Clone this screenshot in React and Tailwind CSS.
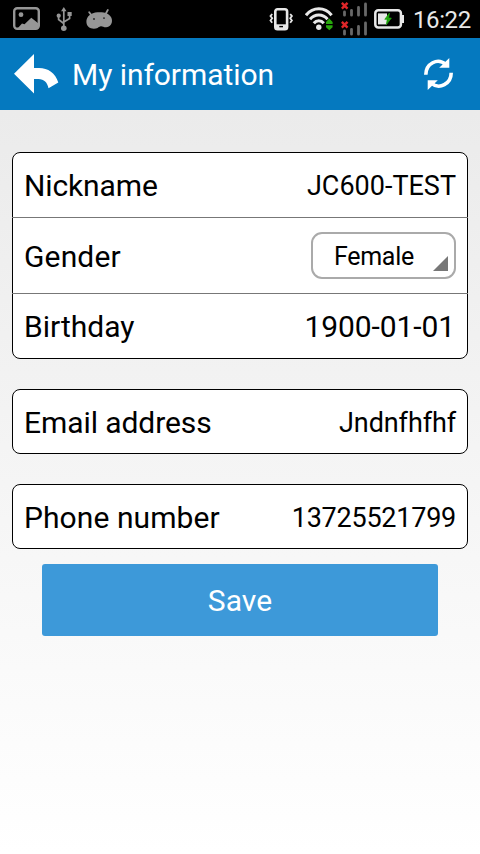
const profileRows = [
  { label: 'Nickname', value: 'JC600-TEST', height: 'h-16', labelClass: 'tracking-[-0.12px]', valueClass: 'text-[27px]' },
  { label: 'Gender', value: 'Female', height: 'h-[75px]', labelClass: 'tracking-[0.15px]', select: true },
  { label: 'Birthday', value: '1900-01-01', height: 'h-16', valueClass: 'text-[30px] tracking-[-0.1px] pr-px' },
];

function GalleryIcon() {
  return (
    <svg width="27" height="23" viewBox="0 0 27 23" fill="none">
      <rect x="1.2" y="1.2" width="24.6" height="20.6" rx="3" stroke="#969696" strokeWidth="2.4" />
      <circle cx="8" cy="7.7" r="2.4" fill="#969696" />
      <path d="M4.5 21.5L9 16.5L11.5 17.3L18.3 10.8L25.5 16.5V20L24 21.5Z" fill="#969696" />
    </svg>
  );
}

function UsbIcon() {
  return (
    <svg width="16" height="24" viewBox="0 0 16 24" fill="none">
      <path d="M7.8 3V20M2.6 9V12.5L7.8 16.5M13.6 7.5V11.5L7.8 15" stroke="#969696" strokeWidth="1.7" />
      <path d="M7.8 0L10.5 4.3H5.1Z" fill="#969696" />
      <circle cx="2.7" cy="8.7" r="2.1" fill="#969696" />
      <rect x="11.5" y="5" width="4.2" height="4" fill="#969696" />
      <circle cx="7.8" cy="21.2" r="2.8" fill="#969696" />
    </svg>
  );
}

function AndroidIcon() {
  return (
    <svg width="27" height="20" viewBox="0 0 27 20" fill="none">
      <path d="M3.2 3.2L5.6 6.5M21.8 1L19.6 5" stroke="#969696" strokeWidth="1.8" strokeLinecap="round" />
      <path d="M0.4 13C0.2 7.5 5 3.8 11.5 3.3C18 2.8 24.5 4.5 25.8 10C26.8 14.5 24 18.2 20.2 18.3C17.5 18.4 16.2 16.8 14.2 17.4C12.2 18 11.2 19.7 7.8 19.7C3.8 19.7 0.6 17.5 0.4 13Z" fill="#969696" />
      <circle cx="8" cy="10" r="0.9" fill="#222" />
      <circle cx="18" cy="9.1" r="0.9" fill="#222" />
    </svg>
  );
}

function VibrateIcon() {
  return (
    <svg width="25" height="23" viewBox="0 0 25 23" fill="none" stroke="#e8e8e8">
      <rect x="6.3" y="1.3" width="11.8" height="20" rx="2.2" strokeWidth="2.6" />
      <path d="M6.5 18.6H17.9" strokeWidth="4.6" />
      <path d="M10.3 18.6H14" stroke="#000" strokeWidth="1.4" />
      <path d="M3.2 6L1.5 8L3.2 10.2L1.5 12.5L3.2 14.8M21.2 6L22.9 8L21.2 10.2L22.9 12.5L21.2 14.8" strokeWidth="1.8" />
    </svg>
  );
}

function WifiIcon() {
  return (
    <svg width="28" height="24" viewBox="0 0 28 24" fill="none">
      <g stroke="#e8e8e8" strokeWidth="3">
        <path d="M1 8.2C8 -0.3 19.8 -0.3 26.6 8.2" />
        <path d="M5 12.3C9.8 6.7 17.8 6.7 22.6 12.3" />
        <path d="M8.8 16.3C11.6 12.9 16 12.9 18.8 16.3" />
      </g>
      <circle cx="13.8" cy="20.2" r="2.7" fill="#e8e8e8" />
      <path d="M24.3 11.5L27.6 15V17H21V15ZM24.3 23.2L21 20.2V18.2H27.6V20.2Z" fill="#000" stroke="#000" strokeWidth="1" />
      <path d="M24.3 11.5L27.6 15V17H21V15ZM24.3 23.2L21 20.2V18.2H27.6V20.2Z" fill="#28a80c" />
    </svg>
  );
}

function NoSignalIcon() {
  return (
    <svg width="26" height="16" viewBox="0 0 26 16" fill="none">
      <path d="M3.5 10V13.2M10.5 8.3V13.2M17.5 5.5V13.2M24.5 2V13.2" stroke="#686868" strokeWidth="2.8" strokeLinecap="round" />
      <path d="M0.8 0.9L6.5 6.6M6.5 0.9L0.8 6.6" stroke="#df2629" strokeWidth="2.5" />
    </svg>
  );
}

function BatteryIcon() {
  return (
    <svg width="31" height="20" viewBox="0 0 31 20" fill="none">
      <rect x="1.3" y="1.3" width="25.6" height="17.2" rx="3" stroke="#e8e8e8" strokeWidth="2.5" />
      <path d="M28 6H30V14H28Z" fill="#e8e8e8" />
      <rect x="4" y="4.4" width="9" height="11" fill="#e8e8e8" />
      <path d="M15.4 4.2L10.8 10.3H13.3L12.4 15.6L17.3 9.1H14.6Z" fill="#1fa50d" stroke="#1fa50d" strokeWidth="0.8" />
    </svg>
  );
}

function StatusBar() {
  return (
    <div className="flex h-[38px] items-start bg-black pr-[9px] pl-[13px]">
      <div className="flex items-start pt-[7px]">
        <GalleryIcon />
        <div className="ml-[16px]"><UsbIcon /></div>
        <div className="mt-[2px] ml-[14px]"><AndroidIcon /></div>
      </div>
      <div className="ml-auto flex items-start">
        <div className="mt-[8px]"><VibrateIcon /></div>
        <div className="mt-[7px] ml-[11px]"><WifiIcon /></div>
        <div className="mt-[2px] ml-[8px] flex flex-col gap-[3px]">
          <NoSignalIcon />
          <NoSignalIcon />
        </div>
        <div className="mt-[9px] ml-[7px]"><BatteryIcon /></div>
        <span className="ml-[8px] w-[58px] pt-px text-[24px] leading-[38px] tracking-[-0.4px] text-[#e8e8e8]">16:22</span>
      </div>
    </div>
  );
}

function Header() {
  return (
    <header className="flex h-[72px] items-center bg-[#0579bf] pr-[26px] pl-[14px] text-white">
      <button aria-label="Back">
        <svg width="45" height="40" viewBox="0 0 45 40" fill="currentColor">
          <path d="M20 0V14H25C34 14 41.5 19 44.3 28.5L34.5 34.3C33.5 28.5 30 25 24.5 25H20V39.5L0 19.7Z" />
        </svg>
      </button>
      <h1 className="ml-[13px] pt-0.5 text-[30px] leading-9 tracking-[-0.06px]">My information</h1>
      <button aria-label="Refresh" className="ml-auto">
        <svg width="30" height="32" viewBox="0 0 30 32" fill="none">
          <path d="M1.8 16.7C1.8 5.7 13.5 -0.8 21.8 6.4M27.2 14.7C27.2 25.6 15.5 32.2 7.2 25.2" stroke="currentColor" strokeWidth="3.6" />
          <path d="M25.3 0V9.8H15.2ZM3.7 32V22.2H13.8Z" fill="currentColor" />
        </svg>
      </button>
    </header>
  );
}

function Select({ value }) {
  return (
    <button className="flex h-[47px] w-[145px] items-center justify-between rounded-[11px] border-2 border-[#aaa] pr-[6px] pl-[21px] text-[25px]">
      <span className="pt-0.5 tracking-[-0.3px]">{value}</span>
      <svg width="15" height="15" viewBox="0 0 15 15" className="mb-[6px] self-end">
        <path d="M15 0V15H0Z" fill="#777" />
      </svg>
    </button>
  );
}

function Card({ children }) {
  return <section className="rounded-[8px] border border-black bg-white">{children}</section>;
}

function Row({ label, value, height = 'h-[63px]', labelClass = '', valueClass = 'text-[27px]', select }) {
  return (
    <div className={`flex items-center justify-between px-[11px] ${height}`}>
      <span className={`pt-0.5 text-[30px] leading-9 ${labelClass}`}>{label}</span>
      {select ? <Select value={value} /> : <span className={`pt-0.5 leading-9 ${valueClass}`}>{value}</span>}
    </div>
  );
}

export default function App() {
  return (
    <div className="flex h-[854px] w-[480px] flex-col overflow-hidden font-['Roboto',sans-serif] text-black">
      <StatusBar />
      <Header />
      <main className="flex-1 bg-linear-to-b from-[#ebebeb] to-white px-3 pt-[42px]">
        <div className="flex flex-col gap-[30px]">
          <Card>
            {profileRows.map((row, i) => (
              <div key={row.label}>
                {i > 0 && <div className="-mx-px h-px bg-[#777]" />}
                <Row {...row} />
              </div>
            ))}
          </Card>
          <Card>
            <Row label="Email address" value="Jndnfhfhf" labelClass="tracking-[-0.08px]" valueClass="text-[27px] tracking-[-0.1px]" />
          </Card>
          <Card>
            <Row label="Phone number" value="13725521799" labelClass="tracking-[0.08px]" valueClass="text-[27px] tracking-[-0.24px]" />
          </Card>
        </div>
        <button className="mx-[30px] mt-[15px] flex h-[72px] w-[396px] items-center justify-center rounded-[3px] bg-[#3d99d9] text-[30px] tracking-[0.1px] text-white">
          Save
        </button>
      </main>
    </div>
  );
}
